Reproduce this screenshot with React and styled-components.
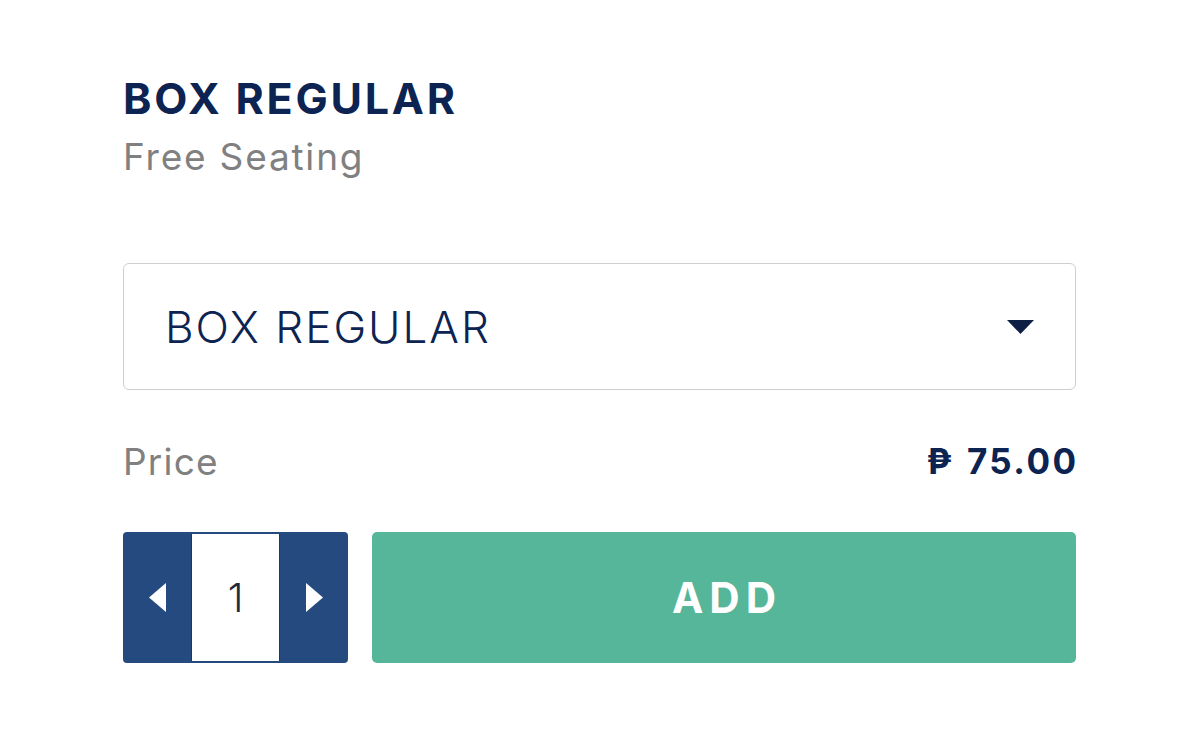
import styled, { createGlobalStyle } from "styled-components";

const Global = createGlobalStyle`
  body {
    margin: 0;
    background: #ffffff;
    font-family: Inter, "Noto Sans", sans-serif;
  }
`;

const Wrap = styled.div`
  width: 953px;
  padding: 74px 0 0 123px;
  display: flex;
  flex-direction: column;
`;

const Title = styled.h1`
  margin: 0;
  font-size: 43px;
  line-height: 48px;
  font-weight: 700;
  color: #0d2452;
  letter-spacing: 2.8px;
`;

const Sub = styled.div`
  margin-top: 12px;
  font-size: 37px;
  line-height: 46px;
  font-weight: 400;
  color: #808080;
  letter-spacing: 1.8px;
`;

const Select = styled.div`
  margin-top: 83px;
  height: 125px;
  border: 1px solid #cfcfcf;
  border-radius: 6px;
  display: flex;
  align-items: center;
  justify-content: space-between;
  padding: 0 41px 0 41px;
  color: #0d2452;
  font-size: 44px;
  font-weight: 300;
  letter-spacing: 2px;
`;

const Caret = styled.svg`
  width: 27px;
  height: 14px;
  display: block;
`;

const PriceRow = styled.div`
  height: 142px;
  display: flex;
  align-items: center;
  justify-content: space-between;
`;

const Label = styled.span`
  font-size: 37px;
  color: #808080;
  letter-spacing: 1.2px;
`;

const Amount = styled.span`
  font-size: 35px;
  font-weight: 700;
  color: #0d2452;
  letter-spacing: 2.4px;
  margin-right: -2.4px;
  word-spacing: 2px;
`;

const Actions = styled.div`
  display: flex;
  gap: 24px;
  height: 131px;
`;

const Stepper = styled.div`
  width: 225px;
  background: #244a80;
  border-radius: 4px;
  display: flex;
  overflow: hidden;
`;

const Arrow = styled.button`
  width: 68px;
  border: 0;
  padding: 0;
  background: transparent;
  display: flex;
  align-items: center;
  justify-content: center;
`;

const Qty = styled.div`
  flex: 1;
  margin: 2px 0;
  background: #ffffff;
  border-left: 1px solid #1b3764;
  border-right: 1px solid #1b3764;
  display: flex;
  align-items: center;
  justify-content: center;
  font-size: 40px;
  font-weight: 300;
  color: #1e2b3c;
`;

const AddButton = styled.button`
  flex: 1;
  border: 0;
  border-radius: 5px;
  background: #55b699;
  color: #ffffff;
  font-family: inherit;
  font-size: 42px;
  font-weight: 700;
  letter-spacing: 6px;
  text-indent: 6px;
`;

export default function App() {
  return (
    <>
      <Global />
      <Wrap>
        <Title>BOX REGULAR</Title>
        <Sub>Free Seating</Sub>
        <Select>
          <span>BOX REGULAR</span>
          <Caret viewBox="0 0 27 14">
            <polygon points="0,0 27,0 13.5,14" fill="#0d1f45" />
          </Caret>
        </Select>
        <PriceRow>
          <Label>Price</Label>
          <Amount>₱ 75.00</Amount>
        </PriceRow>
        <Actions>
          <Stepper>
            <Arrow aria-label="decrease">
              <svg width="17" height="29" viewBox="0 0 17 29">
                <polygon points="17,0 17,29 0,14.5" fill="#ffffff" />
              </svg>
            </Arrow>
            <Qty>1</Qty>
            <Arrow aria-label="increase">
              <svg width="17" height="29" viewBox="0 0 17 29">
                <polygon points="0,0 0,29 17,14.5" fill="#ffffff" />
              </svg>
            </Arrow>
          </Stepper>
          <AddButton>ADD</AddButton>
        </Actions>
      </Wrap>
    </>
  );
}
